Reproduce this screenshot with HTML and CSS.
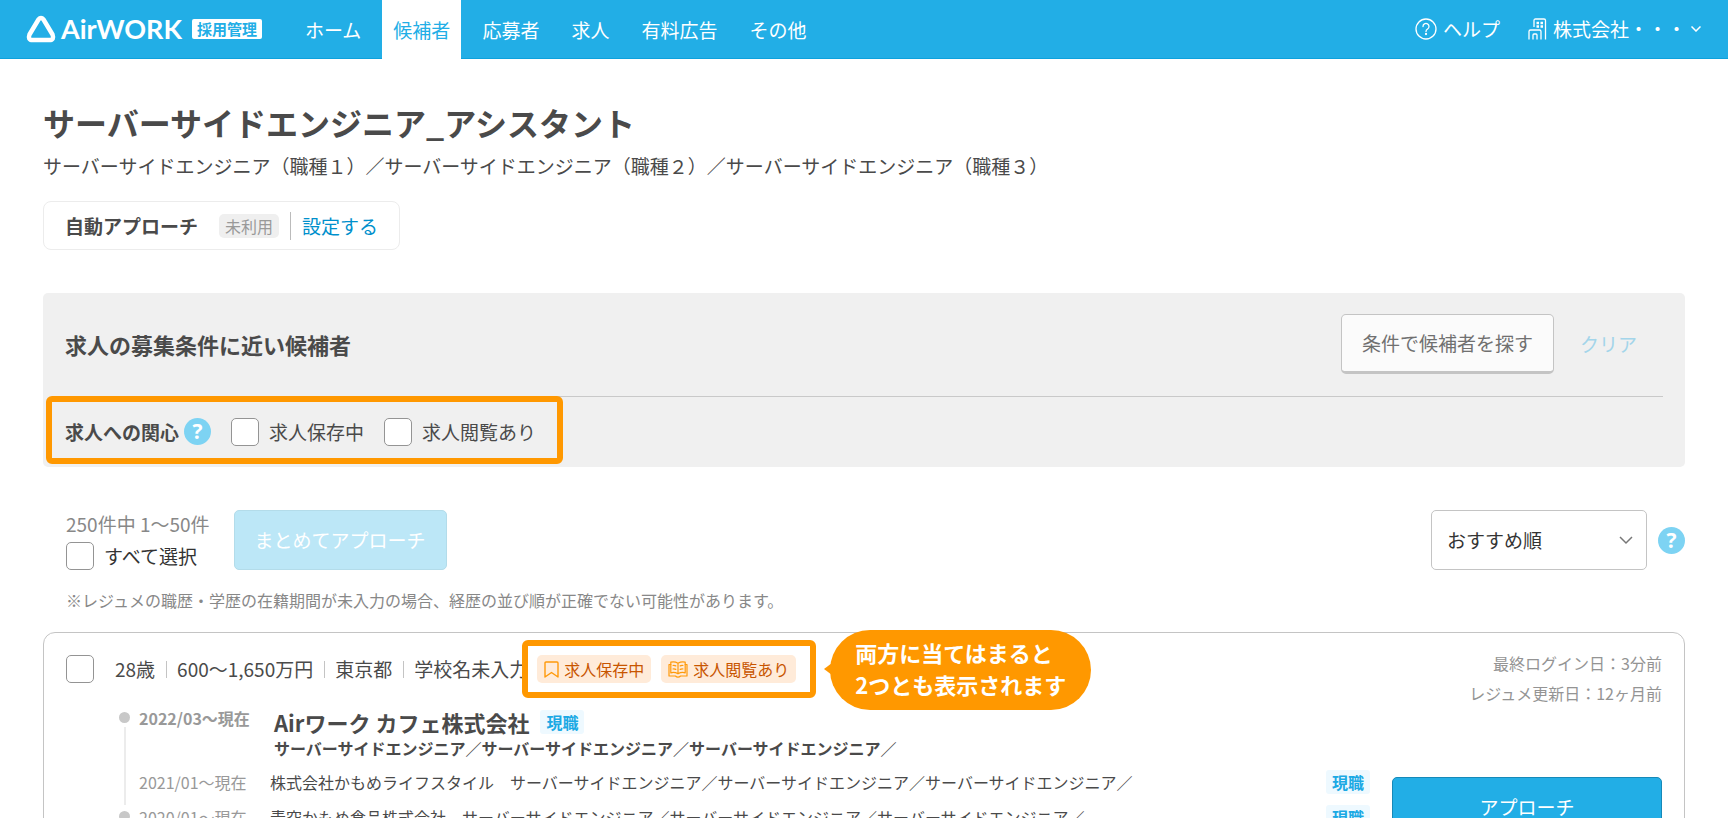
FILE: index.html
```html
<!DOCTYPE html>
<html lang="ja">
<head>
    <meta charset="UTF-8">
    <meta name="viewport" content="width=device-width, initial-scale=1.0">
    <title>候補者 | AirWORK 採用管理</title>
    <link rel="stylesheet" href="styles.css">
</head>
<body>
    <header class="header">
        <a class="logo" href="#">
            <svg class="logo-mark" width="30" height="28" viewBox="0 0 30 28" fill="none" stroke="#fff" stroke-width="4.500" stroke-linejoin="round">
                <path d="M12.500 4.500Q15 1.500 17.500 4.500L26.500 19.500Q28.500 25 23.500 25H6.500Q1.500 25 3.500 19.500Z"/>
            </svg>
            <span class="logo-text">AirWORK</span>
            <span class="logo-badge">採用管理</span>
        </a>
        <nav class="nav">
            <a href="#">ホーム</a>
            <a class="active" href="#">候補者</a>
            <a href="#">応募者</a>
            <a href="#">求人</a>
            <a href="#">有料広告</a>
            <a href="#">その他</a>
        </nav>
        <div class="header-menu">
            <a class="menu-item" href="#">
                <svg width="22" height="22" viewBox="0 0 22 22" fill="none" stroke="#fff" stroke-width="1.300" stroke-linecap="round">
                    <circle cx="11" cy="11" r="10"/>
                    <path d="M8 8.500a3 3 0 1 1 4.600 2.500Q11 12 11 13.400"/>
                    <circle cx="11" cy="16" r=".5" fill="#fff"/>
                </svg>
                ヘルプ
            </a>
            <button class="menu-item company-menu" type="button">
                <svg width="20" height="22" viewBox="0 0 20 22" fill="none" stroke="#fff" stroke-width="1.300">
                    <path d="M6 9V2.500Q6 1 7.500 1H16Q17.500 1 17.500 2.500V21.500"/>
                    <path d="M1 21.500V13.500Q1 12 2.500 12H11.500Q13 12 13 13.500V21.500"/>
                    <path d="M5 21.500V17Q5 16 6 16H8Q9 16 9 17V21.500"/>
                    <path d="M8.500 5h2.500M12.500 5h2.500M8.500 8.500h2.500M12.500 8.500h2.500" stroke-width="2.500"/>
                </svg>
                <span>株式会社・・・</span>
                <svg width="10" height="6" viewBox="0 0 10 6" fill="none" stroke="#fff" stroke-width="1.500">
                    <path d="M.5.5L5 5L9.500.5"/>
                </svg>
            </button>
        </div>
    </header>

    <main class="main">
        <h1>サーバーサイドエンジニア_アシスタント</h1>
        <p class="job-types">サーバーサイドエンジニア（職種１）／サーバーサイドエンジニア（職種２）／サーバーサイドエンジニア（職種３）</p>

        <div class="auto-approach">
            <strong>自動アプローチ</strong>
            <span class="status">未利用</span>
            <a href="#">設定する</a>
        </div>

        <section class="filter">
            <div class="filter-top">
                <h2>求人の募集条件に近い候補者</h2>
                <button class="btn btn-search" type="button">条件で候補者を探す</button>
                <button class="btn-clear" type="button">クリア</button>
            </div>
            <div class="interest highlight">
                <strong>求人への関心</strong>
                <button class="help" type="button" aria-label="求人への関心について">?</button>
                <label class="check"><input type="checkbox">求人保存中</label>
                <label class="check"><input type="checkbox">求人閲覧あり</label>
            </div>
        </section>

        <div class="toolbar">
            <div class="count">
                <span>250件中 1〜50件</span>
                <label class="check"><input type="checkbox">すべて選択</label>
            </div>
            <button class="btn btn-bulk" type="button">まとめてアプローチ</button>
            <div class="sort">
                <select aria-label="並び順">
                    <option>おすすめ順</option>
                </select>
                <svg class="sort-arrow" width="14" height="9" viewBox="0 0 14 9" fill="none" stroke="#777" stroke-width="1.500">
                    <path d="M1 1L7 7L13 1"/>
                </svg>
            </div>
            <button class="help" type="button" aria-label="並び順について">?</button>
        </div>
        <p class="note">※レジュメの職歴・学歴の在籍期間が未入力の場合、経歴の並び順が正確でない可能性があります。</p>

        <article class="card">
            <div class="card-body">
                <div class="profile">
                    <input type="checkbox" aria-label="候補者を選択">
                    <ul class="attributes">
                        <li>28歳</li>
                        <li>600〜1,650万円</li>
                        <li>東京都</li>
                        <li>学校名未入力</li>
                    </ul>
                    <div class="tags highlight">
                        <span class="tag">
                            <svg width="15" height="17" viewBox="0 0 15 17" fill="none" stroke="#ff9a0a" stroke-width="1.400" stroke-linejoin="round">
                                <path d="M1 2Q1 1 2 1H13Q14 1 14 2V16L7.500 11.500L1 16Z"/>
                            </svg>
                            求人保存中
                        </span>
                        <span class="tag">
                            <svg width="20" height="17" viewBox="0 0 20 17" fill="none" stroke="#ff9a0a" stroke-width="1.200" stroke-linejoin="round" stroke-linecap="round">
                                <path d="M10 2.200Q6.500.2 2.800 1.200V11.800Q6.500 10.800 10 12.800Q13.500 10.800 17.200 11.800V1.200Q13.500.2 10 2.200V12.800"/>
                                <path d="M2.800 3.500H1V15H7.500Q8.500 16.200 10 16.200T12.500 15H19V3.500H17.200"/>
                                <path d="M5 4.500Q6.500 4.200 7.800 4.900M5 8Q6.500 7.700 7.800 8.400M12.200 4.900Q13.500 4.200 15 4.500M12.200 8.400Q13.500 7.700 15 8"/>
                            </svg>
                            求人閲覧あり
                        </span>
                        <p class="bubble">両方に当てはまると<br>2つとも表示されます</p>
                    </div>
                </div>

                <ol class="career">
                    <li class="entry">
                        <div class="rail"></div>
                        <div class="entry-rows">
                            <div class="job job-main">
                                <span class="date">2022/03〜現在</span>
                                <div>
                                    <div class="company">
                                        <h3>Airワーク カフェ株式会社</h3>
                                        <span class="current">現職</span>
                                    </div>
                                    <p>サーバーサイドエンジニア／サーバーサイドエンジニア／サーバーサイドエンジニア／</p>
                                </div>
                            </div>
                            <div class="job">
                                <span class="date">2021/01〜現在</span>
                                <p>株式会社かもめライフスタイル　サーバーサイドエンジニア／サーバーサイドエンジニア／サーバーサイドエンジニア／</p>
                                <span class="current">現職</span>
                            </div>
                        </div>
                    </li>
                    <li class="entry">
                        <div class="rail"></div>
                        <div class="entry-rows">
                            <div class="job">
                                <span class="date">2020/01〜現在</span>
                                <p>青空かもめ食品株式会社　サーバーサイドエンジニア／サーバーサイドエンジニア／サーバーサイドエンジニア／</p>
                                <span class="current">現職</span>
                            </div>
                        </div>
                    </li>
                </ol>
            </div>
            <div class="card-side">
                <p>最終ログイン日：3分前</p>
                <p>レジュメ更新日：12ヶ月前</p>
                <button class="btn btn-approach" type="button">アプローチ</button>
            </div>
        </article>
    </main>
</body>
</html>
```
FILE: styles.css
```css
* {
    box-sizing: border-box;
}
body {
    margin: 0;
    font-family: "Noto Sans CJK JP", sans-serif;
    font-size: 19px;
    line-height: 28px;
    color: #4a4a4a;
    background-color: #fff;
}
h1, h2, h3, p, ul, ol {
    margin: 0;
    padding: 0;
}
ul, ol {
    list-style: none;
}
a {
    text-decoration: none;
}
button, select {
    font: inherit;
    cursor: pointer;
}
svg {
    flex: none;
}

/* header */
.header {
    display: flex;
    align-items: center;
    height: 59px;
    padding: 0 27px 0 26px;
    background-color: #22aee6;
    border-bottom: 1px solid #0da1dd;
}
.logo {
    display: flex;
    align-items: center;
    color: #fff;
}
.logo-text {
    margin: 0 10px 0 5px;
    font-family: Lato, sans-serif;
    font-size: 27px;
    font-weight: bold;
}
.logo-badge {
    padding: 0 5px;
    font-size: 15px;
    font-weight: bold;
    line-height: 20px;
    color: #22aee6;
    background-color: #fff;
    border-radius: 2px;
}
.nav {
    display: flex;
    gap: 10px;
    margin-left: 32px;
}
.nav a {
    padding: 0 11px;
    line-height: 59px;
    color: #fff;
    white-space: nowrap;
}
.nav .active {
    color: #22aee6;
    background-color: #fff;
}
.header-menu {
    display: flex;
    gap: 28px;
    margin-left: auto;
}
.menu-item {
    display: flex;
    align-items: center;
    gap: 6px;
    padding: 0;
    line-height: 30px;
    color: #fff;
    background: none;
    border: none;
    white-space: nowrap;
}
.company-menu {
    gap: 5px;
}

/* page head */
.main {
    padding: 43px 43px 0;
}
h1 {
    font-size: 32px;
    line-height: 40px;
}
.job-types {
    margin-top: 10px;
}
.auto-approach {
    display: inline-flex;
    align-items: center;
    height: 49px;
    margin-top: 21px;
    padding: 0 21px;
    border: 1px solid #ececec;
    border-radius: 8px;
}
.status {
    margin: 0 11px 0 21px;
    padding: 0 6px;
    font-size: 16px;
    line-height: 24px;
    color: #999;
    background-color: #efefef;
    border-radius: 5px;
}
.auto-approach a {
    padding-left: 11px;
    color: #0090cc;
    border-left: 1px solid #bbb;
}

/* controls */
input[type="checkbox"] {
    appearance: none;
    flex: none;
    width: 28px;
    height: 28px;
    margin: 0;
    background-color: #fff;
    border: 1px solid #949494;
    border-radius: 5px;
}
input[type="checkbox"]:checked {
    background-color: #22aee6;
}
.check {
    display: flex;
    align-items: center;
    gap: 10px;
}
.help {
    flex: none;
    width: 27px;
    height: 27px;
    padding: 0;
    font-family: "Open Sans", sans-serif;
    font-size: 21px;
    font-weight: bold;
    line-height: 27px;
    color: #fff;
    background-color: #7dd3f3;
    border: none;
    border-radius: 50%;
}
.btn {
    height: 60px;
    padding: 0 20px;
    border: 1px solid #c4c4c4;
    border-radius: 5px;
}
.highlight {
    border: 6px solid #ff9800;
    border-radius: 6px;
}

/* filter panel */
.filter {
    margin-top: 43px;
    padding-bottom: 3px;
    background-color: #f0f0f0;
    border-radius: 5px;
}
.filter-top {
    display: flex;
    align-items: center;
    height: 104px;
    margin: 0 22px;
    padding-bottom: 2px;
    border-bottom: 1px solid #c9c9c9;
}
h2 {
    margin-right: auto;
    font-size: 22px;
}
.btn-search {
    color: #707070;
    background-color: #fbfbfb;
    border-bottom: 3px solid #c4c4c4;
}
.btn-clear {
    padding: 0 26px;
    color: #a3d5ea;
    background: none;
    border: none;
}
.interest {
    display: flex;
    align-items: center;
    width: fit-content;
    height: 68px;
    margin: -1px 3px 0;
    padding: 3px 21px 0 13px;
}
.interest .help {
    margin-left: 5px;
}
.interest .check {
    margin-left: 20px;
}

/* toolbar */
.toolbar {
    display: flex;
    align-items: center;
    margin-top: 43px;
    padding-left: 23px;
}
.count {
    display: flex;
    flex-direction: column;
    gap: 4px;
    margin-right: 24px;
    color: #888;
}
.count .check {
    color: #333;
}
.btn-bulk {
    color: #fff;
    background-color: #bce7f7;
    border-color: #b3dcea;
}
.sort {
    position: relative;
    margin: 0 11px 0 auto;
}
.sort select {
    appearance: none;
    width: 216px;
    height: 60px;
    padding: 0 15px;
    color: #333;
    background-color: #fff;
    border: 1px solid #c4c4c4;
    border-radius: 5px;
}
.sort-arrow {
    position: absolute;
    top: 26px;
    right: 14px;
    pointer-events: none;
}
.note {
    margin: 18px 0 20px 23px;
    font-size: 16px;
    line-height: 24px;
    color: #888;
}

/* candidate card */
.card {
    display: flex;
    gap: 22px;
    padding: 7px 22px 22px;
    border: 1px solid #c4c4c4;
    border-radius: 12px;
}
.card-body {
    flex: 1;
}
.profile {
    display: flex;
    align-items: center;
    height: 58px;
}
.attributes {
    display: flex;
    margin-left: 21px;
    white-space: nowrap;
}
.attributes li {
    display: flex;
    align-items: center;
}
.attributes li + li::before {
    content: "";
    width: 1px;
    height: 17px;
    margin: 0 10px 0 11px;
    background-color: #c4c4c4;
}
.tags {
    position: relative;
    display: flex;
    align-items: center;
    gap: 10px;
    height: 58px;
    margin-left: -6px;
    padding: 0 14px 0 9px;
    background-color: #fff;
}
.tag {
    display: flex;
    align-items: center;
    gap: 5px;
    padding: 0 7px;
    font-size: 16px;
    color: #c85500;
    background-color: #ffebd9;
    border-radius: 5px;
    white-space: nowrap;
}
.bubble {
    position: absolute;
    top: -16px;
    left: 100%;
    margin-left: 20px;
    padding: 6px 25px 10px;
    font-size: 22px;
    font-weight: bold;
    line-height: 32px;
    color: #fff;
    background-color: #ff9800;
    border-radius: 40px;
    white-space: nowrap;
}
.bubble::before {
    content: "";
    position: absolute;
    top: 33px;
    left: -6px;
    border: solid transparent;
    border-width: 6px 8px 6px 0;
    border-right-color: #ff9800;
}
.career {
    padding: 8px 0 0 53px;
}
.entry {
    display: flex;
    gap: 9px;
}
.rail {
    display: flex;
    flex-direction: column;
    align-items: center;
    flex: none;
    width: 11px;
    padding-top: 6px;
}
.rail::before {
    content: "";
    width: 11px;
    height: 11px;
    margin-bottom: 4px;
    background-color: #c8c8c8;
    border-radius: 50%;
}
.rail::after {
    content: "";
    flex: 1;
    width: 2px;
    background-color: #ececec;
}
.entry-rows {
    flex: 1;
}
.job {
    display: flex;
    margin-bottom: 11px;
    font-size: 16px;
    line-height: 24px;
}
.date {
    flex: none;
    width: 131px;
    color: #999;
}
.job > .current {
    margin-left: auto;
}
.job-main {
    font-weight: bold;
}
.job-main .date {
    width: 135px;
}
.job-main p {
    line-height: 21px;
}
.company {
    display: flex;
    align-items: center;
    gap: 11px;
}
h3 {
    font-size: 22px;
    line-height: 32px;
}
.current {
    flex: none;
    padding: 0 6px;
    font-size: 16px;
    font-weight: bold;
    line-height: 24px;
    color: #1ca9e4;
    background-color: #eef9ff;
    border-radius: 3px;
}
.card-side {
    flex: none;
    width: 270px;
    padding-top: 8px;
    font-size: 16px;
    line-height: 30px;
    color: #949494;
    text-align: right;
}
.btn-approach {
    width: 100%;
    margin-top: 69px;
    font-size: 19px;
    color: #fff;
    background-color: #22aee6;
    border-color: #1689b8;
}
```
